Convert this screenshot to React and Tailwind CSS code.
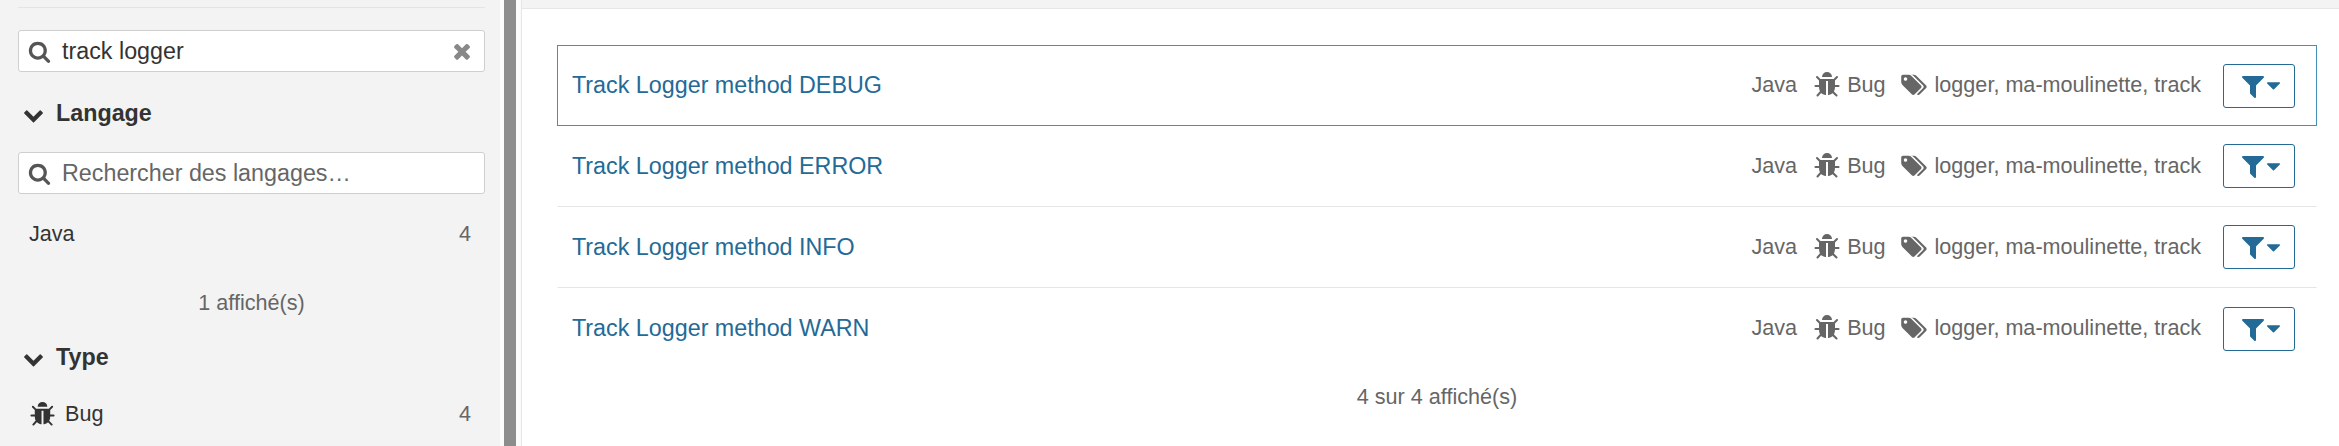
const P = {
  bug: "M1696 960q0 26-19 45t-45 19h-224q0 171-67 290l208 209q19 19 19 45t-19 45q-18 19-45 19t-45-19l-198-197q-5 5-15 13t-42 28.5-65 36.5-82 29-97 13v-896h-128v896q-51 0-101.5-13.5t-87-33-66-39-43.5-32.5l-15-14-183 207q-20 21-48 21-24 0-43-16-19-18-20.5-44.5t15.5-46.5l202-227q-58-114-58-274h-224q-26 0-45-19t-19-45 19-45 45-19h224v-294l-173-173q-19-19-19-45t19-45 45-19 45 19l173 173h844l173-173q19-19 45-19t45 19 19 45-19 45l-173 173v294h224q26 0 45 19t19 45zm-480-576h-640q0-133 93.5-226.5t226.5-93.5 226.5 93.5 93.5 226.5z",
  search: "M1216 832q0-185-131.5-316.5t-316.5-131.5-316.5 131.5-131.5 316.5 131.5 316.5 316.5 131.5 316.5-131.5 131.5-316.5zm512 832q0 52-38 90t-90 38q-54 0-90-38l-343-342q-179 124-399 124-143 0-273.5-55.5t-225-150-150-225-55.5-273.5 55.5-273.5 150-225 225-150 273.5-55.5 273.5 55.5 225 150 150 225 55.5 273.5q0 220-124 399l343 343q37 37 37 90z",
  tags: "M448 448q0-53-37.5-90.5t-90.5-37.5-90.5 37.5-37.5 90.5 37.5 90.5 90.5 37.5 90.5-37.5 37.5-90.5zm1067 576q0 53-37 90l-491 492q-39 37-91 37-53 0-90-37l-715-716q-38-37-64.5-101t-26.5-117v-416q0-52 38-90t90-38h416q53 0 117 26.5t102 64.5l715 714q37 39 37 91zm384 0q0 53-37 90l-491 492q-39 37-91 37-36 0-59-14t-53-45l470-470q37-37 37-90 0-52-37-91l-715-714q-38-38-102-64.5t-117-26.5h224q53 0 117 26.5t102 64.5l715 714q37 39 37 91z",
  filter: "M1595 295q17 41-14 70l-493 493v742q0 42-39 59-13 5-25 5-27 0-45-19l-256-256q-19-19-19-45v-486l-493-493q-31-29-14-70 17-39 59-39h1280q42 0 59 39z",
  times: "M1490 1322q0 40-28 68l-136 136q-28 28-68 28t-68-28l-294-294-294 294q-28 28-68 28t-68-28l-136-136q-28-28-28-68t28-68l294-294-294-294q-28-28-28-68t28-68l136-136q28-28 68-28t68 28l294 294 294-294q28-28 68-28t68 28l136 136q28 28 28 68t-28 68l-294 294 294 294q28 28 28 68z",
  chevron: "M1683 808l-742 741q-19 19-45 19t-45-19l-742-741q-19-19-19-45.5t19-45.5l166-165q19-19 45-19t45 19l531 531 531-531q19-19 45-19t45 19l166 165q19 19 19 45.5t-19 45.5z",
  caret: "M1408 704q0 26-19 45l-448 448q-19 19-45 19t-45-19l-448-448q-19-19-19-45t19-45 45-19h896q26 0 45 19t19 45z",
};
const Icon = ({ name, className, box = "0 0 1792 1792" }) => (
  <svg viewBox={box} fill="currentColor" className={className}><path d={P[name]} /></svg>
);

const SearchBox = ({ text, placeholder, clear }) => (
  <div className="h-[42px] flex items-center rounded-[3px] border border-[#cfcfcf] bg-white pl-[9px] pr-[10px]">
    <Icon name="search" className="w-[23px] h-[23px] text-[#555] shrink-0" />
    <span className={"ml-[11px] grow text-[23.3px] leading-none mt-[2px] " + (placeholder ? "text-[#666]" : "text-[#333]")}>{text}</span>
    {clear && <Icon name="times" className="w-[24px] h-[24px] text-[#888]" />}
  </div>
);

const Heading = ({ children }) => (
  <div className="flex items-center h-[28px] pl-[5px] font-bold text-[23.3px] text-[#333]">
    <Icon name="chevron" className="w-[21px] h-[21px] mt-[3px] mr-[12px]" />
    <span>{children}</span>
  </div>
);

const Row = ({ title, active, last }) => (
  <div className={"flex items-center h-[81px] pl-[14px] pr-[21px] " + (active ? "border border-[#4391b8]" : last ? "border-x border-transparent" : "border-x border-transparent border-b border-b-[#e6e6e6]")}>
    <a className="text-[23.3px] text-[#236a97] grow">{title}</a>
    <div className="flex items-center text-[21.6px] text-[#666]">
      <span>Java</span>
      <Icon name="bug" className="w-[28px] h-[28px] ml-[16px] mr-[6px]" />
      <span>Bug</span>
      <Icon name="tags" box="0 0 1984 1792" className="w-[27px] h-[24px] ml-[15px] mr-[7px]" />
      <span>logger, ma-moulinette, track</span>
    </div>
    <div className="ml-[22px] w-[72px] h-[44px] rounded-[3px] border border-[#236a97] flex items-center justify-center pl-[5px] text-[#236a97]">
      <Icon name="filter" className="w-[28px] h-[28px] shrink-0" />
      <Icon name="caret" className="w-[23px] h-[23px] ml-[-5px] shrink-0" />
    </div>
  </div>
);

export default function App() {
  return (
    <div className="w-[2339px] h-[446px] overflow-hidden flex bg-white" style={{ fontFamily: '"Liberation Sans", Arial, sans-serif' }}>
      <aside className="w-[500px] shrink-0 h-full bg-[#f3f3f3] px-[18px]">
        <div className="mr-[-3px] border-t border-[#e4e4e4] mt-[7px]" />
        <div className="mt-[22px] w-[467px]"><SearchBox text="track logger" clear /></div>
        <div className="mt-[27px]"><Heading>Langage</Heading></div>
        <div className="mt-[25px] w-[467px]"><SearchBox text="Rechercher des langages…" placeholder /></div>
        <div className="flex justify-between items-center mt-[28px] h-[24px] pl-[11px] pr-[11px] text-[21.6px] text-[#333]">
          <span>Java</span><span className="text-[#666]">4</span>
        </div>
        <div className="mt-[45px] text-center text-[21.6px] text-[#666] h-[24px] leading-[24px] w-[467px]">1 affiché(s)</div>
        <div className="mt-[28px]"><Heading>Type</Heading></div>
        <div className="flex items-center mt-[29px] h-[28px] pl-[11px] pr-[11px] text-[21.6px] text-[#333]">
          <Icon name="bug" className="w-[27px] h-[27px] mr-[9px]" />
          <span className="grow">Bug</span>
          <span className="text-[#666]">4</span>
        </div>
      </aside>
      <div className="w-[4px] shrink-0 bg-[#fafafa]" />
      <div className="w-[12px] shrink-0 h-full bg-[#8c8c8c]" />
      <div className="w-[5px] shrink-0 h-full bg-[#fafafa]" />
      <main className="grow h-full border-l border-[#e6e6e6]">
        <div className="h-[9px] bg-[#f3f3f3] border-b border-[#e6e6e6]" />
        <div className="pt-[36px] pl-[35px] pr-[22px]">
          <Row title="Track Logger method DEBUG" active />
          <Row title="Track Logger method ERROR" />
          <Row title="Track Logger method INFO" />
          <Row title="Track Logger method WARN" last />
          <div className="mt-[12px] text-center text-[21.6px] text-[#666]">4 sur 4 affiché(s)</div>
        </div>
      </main>
    </div>
  );
}
